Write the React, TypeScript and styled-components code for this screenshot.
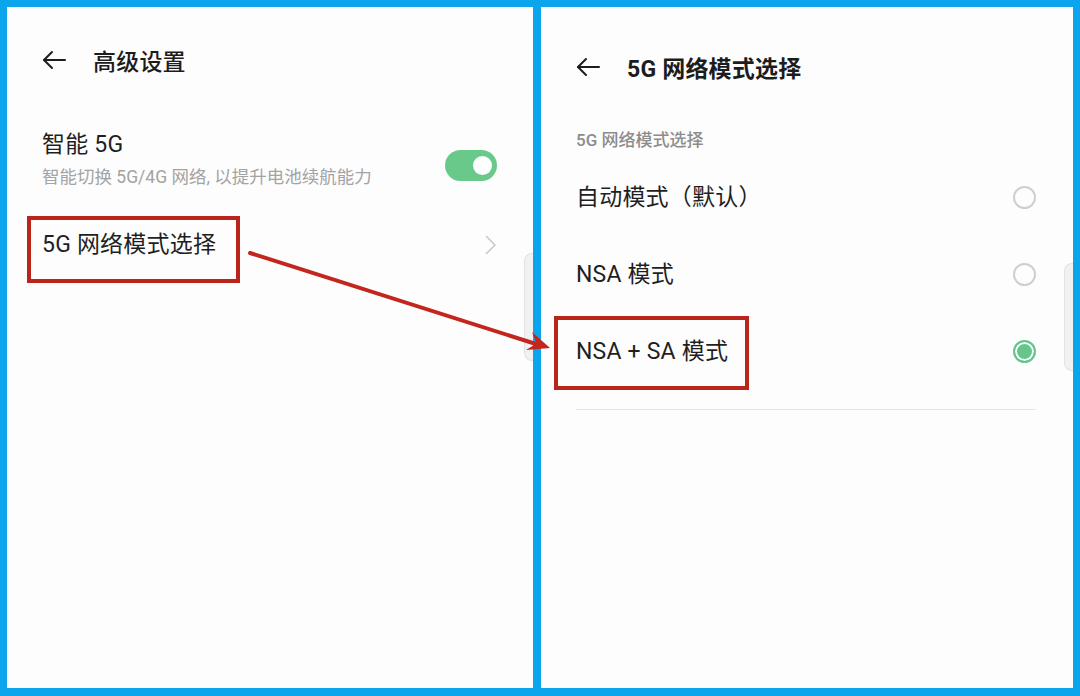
import styled, { createGlobalStyle } from 'styled-components';

const GlobalStyle = createGlobalStyle`
  html, body {
    margin: 0;
    padding: 0;
    background: #0aa5ec;
  }
  body {
    font-family: "Roboto", "Noto Sans CJK SC", sans-serif;
    color: #1f1f1f;
  }
`;

const Frame = styled.div`
  position: relative;
  width: 1080px;
  height: 696px;
  box-sizing: border-box;
  padding: 7px 7px 8px 7px;
  display: grid;
  grid-template-columns: 526px 532px;
  gap: 8px;
  background: #0aa5ec;
  overflow: hidden;
`;

const Panel = styled.section`
  position: relative;
  background: #fdfdfd;
  padding: 0 36px 0 35px;
  display: flex;
  flex-direction: column;
`;

const Header = styled.header<{ $top: number }>`
  display: flex;
  align-items: center;
  gap: 27px;
  height: 56px;
  margin-top: ${(p) => p.$top}px;
`;

const BackButton = styled.span`
  display: flex;
  width: 24px;
  height: 20px;
  color: #1c1c1c;
`;

const Title = styled.h1<{ $bold?: boolean }>`
  margin: 0;
  font-size: 23px;
  font-weight: ${(p) => (p.$bold ? 700 : 500)};
  color: #1c1c1c;
  letter-spacing: 0.2px;
`;

const SettingRow = styled.div<{ $top: number }>`
  display: flex;
  align-items: center;
  justify-content: space-between;
  margin-top: ${(p) => p.$top}px;
`;

const RowText = styled.div`
  display: flex;
  flex-direction: column;
  align-items: flex-start;
  gap: 6px;
`;

const RowTitle = styled.span`
  position: relative;
  font-size: 23px;
  line-height: 30px;
  color: #1f1f1f;
  letter-spacing: 0.2px;
`;

const RowHint = styled.span`
  font-size: 17.5px;
  line-height: 22px;
  color: #a3a3a3;
`;

const Toggle = styled.span<{ $on: boolean }>`
  position: relative;
  width: 52px;
  height: 31px;
  border-radius: 16px;
  background: ${(p) => (p.$on ? '#68c98a' : '#d6d6d6')};
  margin-top: 13px;
  &::after {
    content: '';
    position: absolute;
    top: 6px;
    left: ${(p) => (p.$on ? '28px' : '5px')};
    width: 19px;
    height: 19px;
    border-radius: 50%;
    background: #fff;
  }
`;

const Chevron = styled.span`
  display: flex;
  width: 11px;
  height: 20px;
  margin-right: 1px;
`;

const Mark = styled.span<{ $t: number; $r: number; $b: number; $l: number }>`
  position: absolute;
  top: -${(p) => p.$t}px;
  right: -${(p) => p.$r}px;
  bottom: -${(p) => p.$b}px;
  left: -${(p) => p.$l}px;
  border: 4px solid #b9241b;
  pointer-events: none;
`;

const SectionLabel = styled.div`
  margin-top: 34px;
  font-size: 17px;
  line-height: 22px;
  font-weight: 500;
  color: #8c8c8c;
`;

const OptionList = styled.div`
  margin-top: 8px;
  display: flex;
  flex-direction: column;
`;

const Option = styled.div`
  height: 77px;
  display: flex;
  align-items: center;
  justify-content: space-between;
`;

const Radio = styled.span<{ $checked?: boolean }>`
  box-sizing: border-box;
  width: 23px;
  height: 23px;
  border-radius: 50%;
  margin-right: 1px;
  border: 2px solid ${(p) => (p.$checked ? '#66c68a' : '#cfcfcf')};
  background: ${(p) => (p.$checked ? '#66c68a' : 'transparent')};
  box-shadow: ${(p) => (p.$checked ? 'inset 0 0 0 2px #fff' : 'none')};
`;

const Divider = styled.hr`
  margin: 19px 1px 0 0;
  border: 0;
  border-top: 1px solid #e6e6e6;
`;

const ScrollHint = styled.span<{ $top: number }>`
  position: absolute;
  right: 0;
  top: ${(p) => p.$top}px;
  width: 9px;
  height: 108px;
  box-sizing: border-box;
  border: 1px solid #e2e2e2;
  border-right: 0;
  border-radius: 8px 0 0 8px;
  background: #f1f1f1;
`;

const Pointer = styled.svg`
  position: absolute;
  left: 0;
  top: 0;
  pointer-events: none;
`;

function BackArrow() {
  return (
    <BackButton>
      <svg width="24" height="20" viewBox="0 0 24 20" fill="none" stroke="currentColor" strokeWidth="2" strokeLinecap="round" strokeLinejoin="round">
        <line x1="2" y1="10" x2="23" y2="10" />
        <polyline points="10,2 2,10 10,18" />
      </svg>
    </BackButton>
  );
}

function ChevronRight() {
  return (
    <Chevron>
      <svg width="11" height="20" viewBox="0 0 11 20" fill="none" stroke="#c9c9c9" strokeWidth="1.6" strokeLinecap="round" strokeLinejoin="round">
        <polyline points="1.5,1.5 10,10 1.5,18.5" />
      </svg>
    </Chevron>
  );
}

const options = [
  { label: '自动模式（默认）', checked: false },
  { label: 'NSA 模式', checked: false },
  { label: 'NSA + SA 模式', checked: true },
];

export default function App() {
  return (
    <>
      <GlobalStyle />
      <Frame>
        <Panel>
          <Header $top={25}>
            <BackArrow />
            <Title>高级设置</Title>
          </Header>
          <SettingRow $top={42}>
            <RowText>
              <RowTitle>智能 5G</RowTitle>
              <RowHint>智能切换 5G/4G 网络, 以提升电池续航能力</RowHint>
            </RowText>
            <Toggle $on />
          </SettingRow>
          <SettingRow $top={42}>
            <RowTitle>
              5G 网络模式选择
              <Mark $t={14} $r={24} $b={23} $l={15} />
            </RowTitle>
            <ChevronRight />
          </SettingRow>
          <ScrollHint $top={246} />
        </Panel>

        <Panel>
          <Header $top={32}>
            <BackArrow />
            <Title $bold>5G 网络模式选择</Title>
          </Header>
          <SectionLabel>5G 网络模式选择</SectionLabel>
          <OptionList>
            {options.map((o) => (
              <Option key={o.label}>
                <RowTitle>
                  {o.label}
                  {o.checked && <Mark $t={21} $r={21} $b={23} $l={22} />}
                </RowTitle>
                <Radio $checked={o.checked} />
              </Option>
            ))}
          </OptionList>
          <Divider />
          <ScrollHint $top={256} />
        </Panel>

        <Pointer width="1080" height="696" viewBox="0 0 1080 696">
          <line x1="250" y1="253" x2="536" y2="344" stroke="#c2261d" strokeWidth="4" strokeLinecap="round" />
          <polygon points="550,348 526,350 536.5,343.5 532,332" fill="#c2261d" />
        </Pointer>
      </Frame>
    </>
  );
}
